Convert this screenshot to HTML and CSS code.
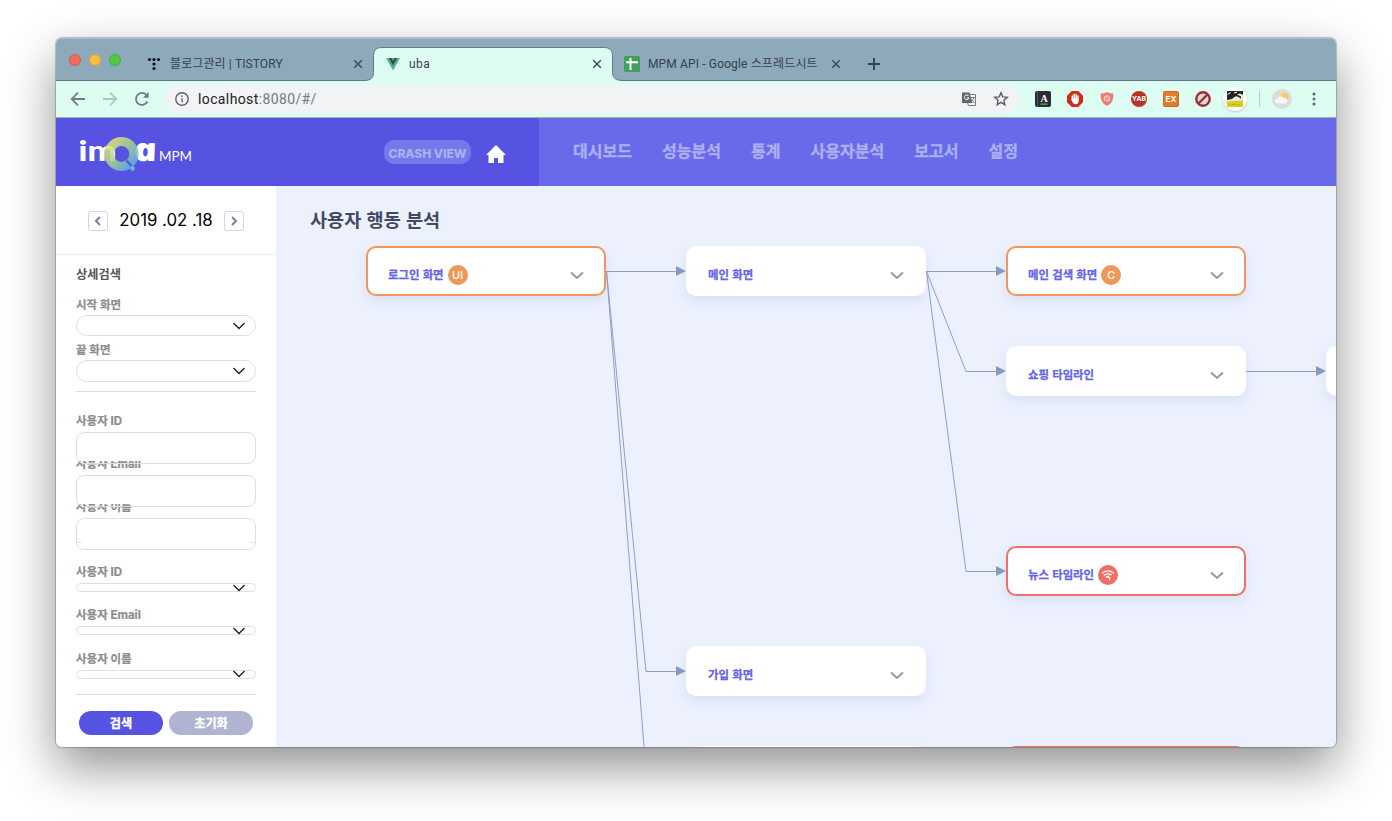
FILE: index.html
```html
<!DOCTYPE html>
<html lang="ko">
<head>
<meta charset="utf-8">
<title>uba</title>
<link rel="stylesheet" href="styles.css">
</head>
<body>
<div class="window">
  <div class="tabstrip">
    <div class="lights"><i class="light red"></i><i class="light yellow"></i><i class="light green"></i></div>
    <div class="tab">
      <svg class="fav" viewBox="0 0 16 16"><g fill="#0b0f12"><circle cx="3.5" cy="3.5" r="1.6"/><circle cx="8" cy="3.5" r="1.6"/><circle cx="12.5" cy="3.5" r="1.6"/><circle cx="8" cy="8" r="1.6"/><circle cx="8" cy="12.5" r="1.6"/></g></svg>
      <span class="title t1">블로그관리 | TISTORY</span>
      <svg class="close" viewBox="0 0 10 10"><path d="M1.2 1.2l7.6 7.6M8.8 1.2L1.2 8.8"/></svg>
    </div>
    <div class="tab active">
      <svg class="shape" width="257" height="34" viewBox="0 0 257 34"><path d="M0 33.5Q8.500 33.500 8.500 25.500V8.500Q8.500.5 16.500.5H239.500Q247.500.5 247.500 8.500V25.500Q247.500 33.500 257 33.500V34H0Z" fill="#ddfdf2"/><path d="M0 33.500Q8.500 33.500 8.500 25.500V8.500Q8.500.5 16.500.5H239.500Q247.500.5 247.500 8.500V25.500Q247.500 33.500 257 33.500" fill="none" stroke="#5f7a8a"/></svg>
      <svg class="fav" viewBox="0 0 16 16"><path d="M1 2h14L8 14.500z" fill="#4fb487"/><path d="M3.800 2h8.400L8 9.500z" fill="#35495e"/><path d="M6.300 2h3.400L8 5z" fill="#4fb487"/></svg>
      <span class="title t2">uba</span>
      <svg class="close" viewBox="0 0 10 10"><path d="M1.200 1.200l7.600 7.600M8.800 1.200L1.200 8.800"/></svg>
    </div>
    <div class="tab">
      <svg class="fav" viewBox="0 0 16 16"><rect width="16" height="16" rx="1.500" fill="#40a05d"/><path d="M2 6.300h12M6.500 2v12" stroke="#fff" stroke-width="2"/></svg>
      <span class="title t3">MPM API - Google 스프레드시트</span>
      <svg class="close" viewBox="0 0 10 10"><path d="M1.200 1.200l7.600 7.600M8.800 1.200L1.200 8.800"/></svg>
    </div>
    <svg class="plus" viewBox="0 0 12 12"><path d="M6 0v12M0 6h12"/></svg>
  </div>

  <div class="toolbar">
    <div class="navs">
      <svg viewBox="0 0 16 16" stroke="#747c7b"><path d="M15 8H2M8 1.700L1.700 8 8 14.300"/></svg>
      <svg viewBox="0 0 16 16" stroke="#b1c6c0"><path d="M1 8h13M8 1.700L14.300 8 8 14.300"/></svg>
      <svg viewBox="0 0 16 16" stroke="#747c7b"><path d="M13.400 10.500A6 6 0 1 1 12.500 4"/><path d="M14.600 1v5.800H8.800z" fill="#747c7b" stroke="none"/></svg>
    </div>
    <div class="omnibox">
      <svg class="info" viewBox="0 0 14 14"><circle cx="7" cy="7" r="6.200" fill="none" stroke="#5f6368" stroke-width="1.400"/><path d="M7 6.200v4M7 3.500v1.500" stroke="#5f6368" stroke-width="1.400"/></svg>
      <span class="url">localhost<em>:8080/#/</em></span>
      <svg class="translate" viewBox="0 0 16 16"><path d="M1 1.500h7.500L11.500 12H1z" fill="#63686d"/><path d="M9.300 3.500H14.500V14.500H7.500L6.500 12" fill="none" stroke="#777c80"/><path d="M7.800 5.200A2.300 2.300 0 1 0 8 7H5.800" fill="none" stroke="#fff"/><path d="M9.800 6.500h4M12.800 6.500q-.5 3-3 4.500M10.500 8.500l3 3.500" fill="none" stroke="#777c80"/></svg>
      <svg class="star" viewBox="0 0 16 16"><path d="M8 1.800l1.800 4.100 4.500.4-3.400 3 1 4.400L8 11.400l-3.900 2.300 1-4.400-3.400-3 4.500-.4z" fill="none" stroke="#5a5f63" stroke-width="1.400"/></svg>
    </div>
    <div class="exts">
      <svg viewBox="0 0 16 16"><rect width="16" height="16" rx="2" fill="#2b2b38"/><path d="M2.500 0v16" stroke="#555562"/><path d="M5.500 13.200h7" stroke="#3dc43c" stroke-width="1.200"/><text x="9" y="10.500" class="glyph serif" font-size="10">A</text></svg>
      <svg viewBox="0 0 16 16"><path d="M4.800 0h6.400L16 4.800v6.400L11.200 16H4.800L0 11.200V4.800z" fill="#d32a14"/><path d="M5.300 8.500V5M7.200 8V3.300M9.200 8V3.600M11 9V5" stroke="#fff" stroke-width="1.500" stroke-linecap="round"/><path d="M4.600 7.500h7.100V10q0 3.200-3.200 3.200Q6 13.200 4.600 9.500z" fill="#fff"/></svg>
      <svg viewBox="0 0 16 16"><path d="M8 1q3 1.700 6.500 1.700Q15 12 8 15 1 12 1.500 2.700 5 2.700 8 1z" fill="#ea7c79"/><circle cx="8" cy="7.500" r="2.700" fill="none" stroke="#fbe3df"/><path d="M6.300 5.800l3.400 3.400" stroke="#fbe3df"/></svg>
      <svg viewBox="0 0 16 16"><circle cx="8" cy="8" r="8" fill="#b93325"/><text x="8" y="10.300" class="glyph" font-size="6.500" textLength="14" lengthAdjust="spacingAndGlyphs">YAB</text></svg>
      <svg viewBox="0 0 16 16"><rect x=".5" y=".5" width="15" height="15" rx="1.500" fill="#e57b28" stroke="#c86a20"/><text x="8" y="10.800" class="glyph" font-size="7.500" textLength="11" lengthAdjust="spacingAndGlyphs">EX</text></svg>
      <svg viewBox="0 0 16 16"><circle cx="8" cy="8" r="6.700" fill="#cfe0d4" stroke="#a62b35" stroke-width="2.400"/><path d="M3.500 12.500l9-9" stroke="#a62b35" stroke-width="2.400"/></svg>
      <svg class="round" viewBox="0 0 24 24"><rect x="4" y="4" width="16" height="16" fill="#e8e8e4"/><path d="M4 4h16v4l-3-1.500-3 1 4 2v2l-6-2-3 2.500-5 1z" fill="#252522"/><path d="M4.500 7.500l3-2M11 6l3-1M13 9.500l4 2" stroke="#fff" fill="none"/><path d="M4 14.500l16-1V20H4z" fill="#d9cf16"/><path d="M6 17.500h12" stroke="#b5ab17" stroke-dasharray="2 1"/></svg>
    </div>
    <i class="vsep"></i>
    <svg class="avatar" viewBox="0 0 20 20"><circle cx="10" cy="10" r="10" fill="#dcdcdc"/><circle cx="12.500" cy="8" r="4" fill="#f7cc59"/><path d="M5.500 14.500a2.500 2.500 0 0 1 0-5 3.300 3.300 0 0 1 6-.5 2.800 2.800 0 0 1 1.800 5.500z" fill="#f5f9ff"/></svg>
    <svg class="dots" viewBox="0 0 4 14"><g fill="#5c6866"><circle cx="2" cy="2" r="1.500"/><circle cx="2" cy="7" r="1.500"/><circle cx="2" cy="12" r="1.500"/></g></svg>
  </div>

  <header class="header">
    <div class="brand">
      <svg class="logo" width="114" height="44" viewBox="0 0 114 44">
        <defs><linearGradient id="q" x1="0" y1="0" x2="1" y2="1"><stop offset=".1" stop-color="#dbe475"/><stop offset=".55" stop-color="#9bd097"/><stop offset=".95" stop-color="#62aee0"/></linearGradient></defs>
        <text x="-.5" y="30.500" class="im" textLength="38" lengthAdjust="spacingAndGlyphs">im</text>
        <text transform="translate(56.500 30.500) skewX(12)" class="la" textLength="23.500" lengthAdjust="spacingAndGlyphs">a</text>
        <circle cx="42.500" cy="24" r="12.500" fill="none" stroke="url(#q)" stroke-width="9.200" opacity=".86"/>
        <path d="M47.500 30.500l5 5.500" stroke="#5753e2" stroke-width="2.500"/>
        <path d="M51 38.500l2.700-3 2.500 3-2.500 3z" fill="#69bccb"/>
        <text x="80" y="30.500" class="mpm" textLength="33" lengthAdjust="spacingAndGlyphs">MPM</text>
      </svg>
      <span class="crash">CRASH VIEW</span>
      <svg class="home" viewBox="0 0 20 18"><path d="M10 0L0 10h2.500v8H8v-5h4v5h5.500v-8H20z" fill="#fff"/></svg>
    </div>
    <nav class="menu"><a>대시보드</a><a>성능분석</a><a>통계</a><a>사용자분석</a><a>보고서</a><a>설정</a></nav>
  </header>

  <div class="content">
    <aside class="side">
      <div class="date">
        <span class="step"><svg viewBox="0 0 8 10"><path d="M6 1L2 5l4 4"/></svg></span>
        <span class="day">2019 .02 .18</span>
        <span class="step"><svg viewBox="0 0 8 10"><path d="M2 1l4 4-4 4"/></svg></span>
      </div>
      <div class="form">
        <h2>상세검색</h2>
        <label class="lb start">시작 화면</label>
        <div class="select tall"><svg viewBox="0 0 12 8"><path d="M.5 1L6 6.500 11.500 1"/></svg></div>
        <label class="lb end">끝 화면</label>
        <div class="select tall second"><svg viewBox="0 0 12 8"><path d="M.5 1L6 6.500 11.500 1"/></svg></div>
        <hr>
        <div class="fields">
          <label class="lb">사용자 ID</label><div class="input"></div>
          <label class="lb">사용자 Email</label><div class="input"></div>
          <label class="lb">사용자 이름</label><div class="input last"></div>
        </div>
        <div class="thin">
          <label class="lb">사용자 ID</label><div class="select"><svg viewBox="0 0 12 8"><path d="M.5 1L6 6.500 11.500 1"/></svg></div>
          <label class="lb">사용자 Email</label><div class="select"><svg viewBox="0 0 12 8"><path d="M.5 1L6 6.500 11.500 1"/></svg></div>
          <label class="lb">사용자 이름</label><div class="select"><svg viewBox="0 0 12 8"><path d="M.5 1L6 6.500 11.500 1"/></svg></div>
        </div>
        <hr class="foot">
        <div class="buttons"><span class="btn">검색</span><span class="btn muted">초기화</span></div>
      </div>
    </aside>

    <main class="canvas">
      <h1>사용자 행동 분석</h1>
      <svg class="links" width="1060" height="561" viewBox="276 186 1060 561">
        <g fill="none" stroke="#8f9fc3"><path d="M606 271.500H678M606.500 271.500L646 671.500H678M606.500 271.500L646 771.500M926 271.500H998M926.500 271.500L966 371.500H998M926.500 271.500L966 571.500H998M1246 371.500H1318"/></g>
        <g fill="#8a9bbf"><path d="M676 266l10 5-10 5zM676 666l10 5-10 5zM996 266l10 5-10 5zM996 366l10 5-10 5zM996 566l10 5-10 5zM1316 366l10 5-10 5z"/></g>
      </svg>
      <div class="node n1 warn"><b>로그인 화면</b><span class="badge">UI</span><svg class="chev" viewBox="0 0 14 9"><path d="M1 1.500l6 5.500 6-5.500"/></svg></div>
      <div class="node n2"><b>메인 화면</b><svg class="chev" viewBox="0 0 14 9"><path d="M1 1.500l6 5.500 6-5.500"/></svg></div>
      <div class="node n3 warn"><b>메인 검색 화면</b><span class="badge">C</span><svg class="chev" viewBox="0 0 14 9"><path d="M1 1.500l6 5.500 6-5.500"/></svg></div>
      <div class="node n4"><b>쇼핑 타임라인</b><svg class="chev" viewBox="0 0 14 9"><path d="M1 1.500l6 5.500 6-5.500"/></svg></div>
      <div class="node n5 error"><b>뉴스 타임라인</b><span class="badge"><svg width="14" height="12" viewBox="0 0 14 12"><g fill="none" stroke="#fff" stroke-width="1.200" stroke-linecap="round"><path d="M1.300 4.200Q7-.3 12.700 4.200M3.300 6.300Q6.500 3.600 10.500 5.700M5.200 8.200Q6 7.200 7.300 7.300"/><path d="M8.200 6.800L7 8.600h2L8.200 11" stroke-width="1"/></g></svg></span><svg class="chev" viewBox="0 0 14 9"><path d="M1 1.500l6 5.500 6-5.500"/></svg></div>
      <div class="node n6"><b>가입 화면</b><svg class="chev" viewBox="0 0 14 9"><path d="M1 1.500l6 5.500 6-5.500"/></svg></div>
      <div class="node n7"></div>
      <div class="node n8"></div>
      <div class="node n9 error"></div>
    </main>
  </div>
</div>
</body>
</html>
```
FILE: styles.css
```css
* { box-sizing: border-box; }
html, body { height: 100%; }
body {
  margin: 0;
  padding: 38px 56px 74px;
  background: #fff;
  overflow: hidden;
  font-family: Inter, "Noto Sans CJK KR", sans-serif;
}
svg { display: block; flex: none; }
h1, h2 { margin: 0; }

.window {
  width: 1280px;
  height: 709px;
  border-radius: 6px;
  overflow: hidden;
  display: flex;
  flex-direction: column;
  box-shadow: 0 0 1px 1px rgba(0, 0, 0, .22), 0 20px 50px rgba(0, 0, 0, .44);
}

/* Tab strip */
.tabstrip {
  flex: none;
  height: 43px;
  background: #8ea9b9;
  border-bottom: 1px solid #5f7a8a;
  box-shadow: inset 0 1px #a9bdc8;
  display: flex;
  padding-left: 13px;
}
.lights { display: flex; gap: 8px; width: 66px; padding-top: 16px; }
.light { width: 12px; height: 12px; border-radius: 50%; border: 1px solid rgba(0, 0, 0, .12); }
.red { background: #ee6a5e; }
.yellow { background: #f4bf3e; }
.green { background: #53c842; }
.tab {
  position: relative;
  width: 239px;
  height: 34px;
  margin-top: 9px;
  padding: 0 11px;
  display: flex;
  align-items: center;
}
.shape { position: absolute; left: -9px; top: 0; }
.fav { width: 16px; height: 16px; margin-right: 8px; position: relative; }
.title {
  flex: 1;
  position: relative;
  font-family: Roboto, "Noto Sans CJK KR", sans-serif;
  font-size: 12px;
  line-height: 16px;
  color: #35424b;
  white-space: nowrap;
}
.t1 { letter-spacing: .1px; }
.t2 { letter-spacing: .45px; color: #3c4043; }
.t3 { letter-spacing: .14px; }
.close { width: 10px; height: 10px; position: relative; }
.close path { fill: none; stroke: #3f4c54; stroke-width: 1.500; }
.plus { width: 12px; height: 12px; margin: 20px 0 0 16px; }
.plus path { stroke: #333e45; stroke-width: 1.800; }

/* Toolbar */
.toolbar {
  flex: none;
  height: 37px;
  background: #ddfdf2;
  border-bottom: 1px solid #9db5ad;
  display: flex;
  align-items: center;
  padding-left: 14px;
}
.navs { display: flex; gap: 16px; }
.navs svg { width: 16px; height: 16px; fill: none; stroke-width: 1.800; }
.omnibox {
  width: 855px;
  height: 28px;
  margin-left: 14px;
  border-radius: 14px;
  background: #f1f3f4;
  display: flex;
  align-items: center;
  padding: 0 10px 0 11px;
}
.info { width: 14px; height: 14px; margin-right: 9px; }
.url {
  flex: 1;
  font-family: Roboto, sans-serif;
  font-size: 14px;
  letter-spacing: .38px;
  color: #202124;
}
.url em { font-style: normal; color: #74797e; }
.translate { width: 16px; height: 16px; margin-right: 16px; }
.star { width: 16px; height: 16px; }
.exts { display: flex; align-items: center; gap: 16px; margin-left: 16px; }
.exts svg { width: 16px; height: 16px; }
.exts .round {
  width: 24px;
  height: 24px;
  margin-left: -4px;
  border-radius: 50%;
  background: #fff;
  box-shadow: 0 1px 2px rgba(0, 0, 0, .2);
}
.glyph { font-family: Inter, sans-serif; font-weight: 700; fill: #fff; text-anchor: middle; }
.serif { font-family: "Liberation Serif", serif; }
.vsep { width: 1px; height: 16px; margin: 0 12px 0 12px; background: #b6cdc5; }
.avatar { width: 20px; height: 20px; }
.dots { width: 4px; height: 14px; margin-left: 20px; }

/* App header */
.header { flex: none; height: 68px; display: flex; background: #686aea; }
.brand { width: 483px; background: #5753e2; display: flex; padding-left: 23px; }
.logo { margin-top: 12px; overflow: visible; }
.im, .la { fill: #fff; font-weight: 900; }
.im { font-family: Lato, sans-serif; font-size: 28px; }
.la { font-family: "Open Sans", "Noto Sans", sans-serif; font-style: italic; font-weight: 800; font-size: 32px; }
.mpm { font-family: Lato, sans-serif; font-size: 14px; fill: #fff; }
.crash {
  width: 87px;
  height: 24px;
  margin: 22px 15px 0 191px;
  border-radius: 10px;
  background: #7578e8;
  color: #abb0ef;
  font-size: 12px;
  font-weight: 800;
  line-height: 27px;
  text-align: center;
  white-space: nowrap;
}
.home { width: 20px; height: 18px; margin-top: 27px; }
.menu { display: flex; gap: 30px; padding: 20px 0 0 34px; }
.menu a {
  font-family: "Noto Sans CJK KR", sans-serif;
  font-weight: 700;
  font-size: 16.050px;
  line-height: 24px;
  color: #abb0ef;
  -webkit-text-stroke: .3px #abb0ef;
}

.content { flex: 1; min-height: 0; display: flex; }

/* Search panel */
.side { width: 220px; background: #fff; }
.date {
  height: 69px;
  border-bottom: 1px solid #e9effd;
  display: flex;
  justify-content: center;
  padding-top: 25px;
}
.step {
  width: 20px;
  height: 20px;
  border: 1px solid #d3d5e2;
  border-radius: 3px;
  display: grid;
  place-items: center;
}
.step svg { width: 8px; height: 10px; }
.step path { fill: none; stroke: #76809f; stroke-width: 2; }
.day { width: 116px; text-align: center; font-size: 16.800px; line-height: 18px; color: #000; white-space: nowrap; }
.form { padding: 0 20px; }
.form h2 {
  height: 20px;
  margin-top: 9px;
  font-family: "Noto Sans CJK KR", sans-serif;
  font-size: 12.200px;
  line-height: 20px;
  color: #585858;
}
.lb {
  display: block;
  height: 16px;
  font-family: Inter, "Noto Sans CJK KR", sans-serif;
  font-size: 11.500px;
  font-weight: 700;
  line-height: 16px;
  color: #8c8c8c;
  white-space: nowrap;
  -webkit-text-stroke: .2px #8c8c8c;
}
.start { margin-top: 13px; }
.end { margin-top: 6px; }
.select {
  height: 10px;
  border: 1px solid #dfdfdf;
  border-radius: 11px;
  display: flex;
  justify-content: flex-end;
  align-items: center;
  padding-right: 10px;
}
.select svg { width: 12px; height: 8px; }
.select path { fill: none; stroke: #1c1c1c; stroke-width: 1.300; }
.tall { height: 21px; margin-top: 2px; }
.second { height: 22px; margin-top: 2px; }
.form hr { height: 1px; margin: 9px 0 0; border: 0; background: #dcdcdc; }
.fields { display: flex; flex-direction: column; margin-top: 21px; }
.fields .lb { margin-bottom: 3px; }
.fields .lb + .input + .lb { margin-top: -8px; }
.input {
  position: relative;
  height: 32px;
  border: 1px solid #dfdfdf;
  border-radius: 8px;
  background: linear-gradient(#fff, #fff) 0 0 / 100% 28px no-repeat;
}
.input:not(.last) { z-index: 1; }
.input.last {
  background: linear-gradient(#dfdfdf, #dfdfdf) 0 23px / 4px 1px no-repeat, linear-gradient(#dfdfdf, #dfdfdf) 100% 23px / 4px 1px no-repeat;
}
.thin { margin-top: 14px; }
.thin .lb { margin-bottom: 3px; }
.thin .select { height: 9px; margin-bottom: 15.400px; }
.form .foot { margin-top: 13px; }
.buttons { display: flex; gap: 6px; padding: 16px 3px 0; }
.btn {
  width: 84px;
  height: 24px;
  border-radius: 12px;
  background: #5753e2;
  color: #fff;
  font-family: "Noto Sans CJK KR", sans-serif;
  font-size: 12.200px;
  font-weight: 700;
  line-height: 24px;
  text-align: center;
  -webkit-text-stroke: .3px #fff;
}
.muted { background: #b0b3d2; }

/* Flow diagram */
.canvas { position: relative; flex: 1; background: #edf1fe; overflow: hidden; }
.canvas h1 {
  padding: 19px 0 0 34px;
  font-family: "Noto Sans CJK KR", sans-serif;
  font-size: 18.600px;
  line-height: 28px;
  color: #434964;
}
.links { position: absolute; left: 0; top: 0; }
.node {
  position: absolute;
  width: 240px;
  height: 50px;
  border: 2px solid #fff;
  border-radius: 10px;
  background: #fff;
  box-shadow: 0 5px 12px rgba(120, 140, 190, .17);
  display: flex;
  align-items: center;
  padding: 7px 20px 0;
}
.warn { border-color: #f09656; }
.error { border-color: #ef6f66; }
.node b {
  margin-bottom: 2px;
  font-family: "Noto Sans CJK KR", sans-serif;
  font-size: 11.400px;
  line-height: 16px;
  color: #6563e8;
  white-space: nowrap;
  -webkit-text-stroke: .25px #6563e8;
}
.badge {
  width: 20px;
  height: 20px;
  margin-left: 4px;
  border-radius: 50%;
  display: grid;
  place-items: center;
  font-size: 11px;
  font-weight: 500;
  color: #fff;
}
.warn .badge { background: #f09656; }
.error .badge { background: #ef6f66; }
.chev { width: 14px; height: 9px; margin: 1px 0 0 auto; }
.chev path { fill: none; stroke: #999; stroke-width: 2; }
.n1 { left: 90px; top: 60px; }
.n2 { left: 410px; top: 60px; }
.n3 { left: 730px; top: 60px; }
.n4 { left: 730px; top: 160px; }
.n5 { left: 730px; top: 360px; }
.n6 { left: 410px; top: 460px; }
.n7 { left: 1050px; top: 160px; }
.n8 { left: 410px; top: 560px; }
.n9 { left: 730px; top: 560px; }
```
